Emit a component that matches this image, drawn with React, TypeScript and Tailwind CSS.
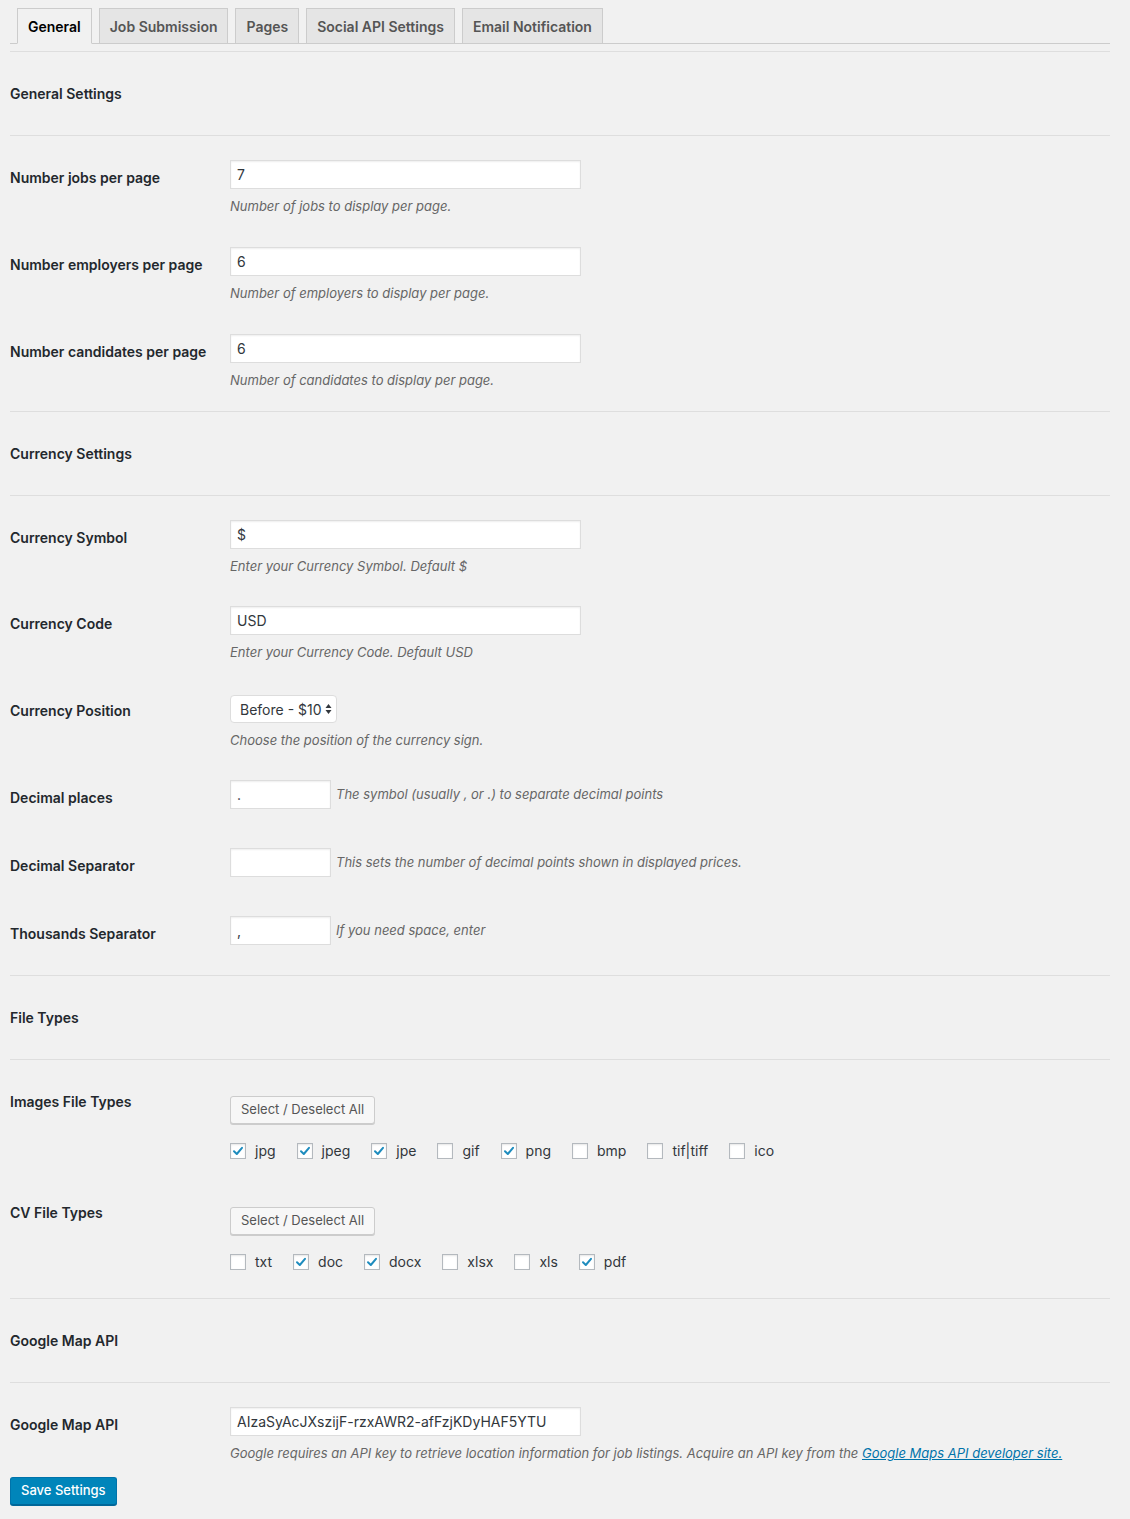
import React from 'react';

const font = { fontFamily: 'Inter, "Noto Sans", sans-serif' };

const tabs = ['General', 'Job Submission', 'Pages', 'Social API Settings', 'Email Notification'];

const imageTypes = [
  { name: 'jpg', checked: true },
  { name: 'jpeg', checked: true },
  { name: 'jpe', checked: true },
  { name: 'gif', checked: false },
  { name: 'png', checked: true },
  { name: 'bmp', checked: false },
  { name: 'tif|tiff', checked: false },
  { name: 'ico', checked: false },
];

const cvTypes = [
  { name: 'txt', checked: false },
  { name: 'doc', checked: true },
  { name: 'docx', checked: true },
  { name: 'xlsx', checked: false },
  { name: 'xls', checked: false },
  { name: 'pdf', checked: true },
];

function Hr() {
  return <div className="h-px bg-[#dedede]" />;
}

function SectionTitle({ title }: { title: string }) {
  return (
    <>
      <Hr />
      <div className="h-[83px] flex items-center text-[14px] font-semibold text-[#23282d]">{title}</div>
      <Hr />
    </>
  );
}

function Label({ text, className = 'pt-[8px]' }: { text: string; className?: string }) {
  return (
    <div className={`w-[220px] shrink-0 text-[14px] leading-[20px] font-semibold text-[#23282d] ${className}`}>
      {text}
    </div>
  );
}

function TextInput({ value, wide = true }: { value: string; wide?: boolean }) {
  return (
    <div
      className={`${wide ? 'w-[351px]' : 'w-[101px]'} h-[29px] bg-white border border-[#dddddd] shadow-[inset_0_1px_2px_rgba(0,0,0,0.07)] px-[6px] flex items-center text-[14px] text-[#32373c]`}
    >
      {value}
    </div>
  );
}

function Desc({ children }: { children: React.ReactNode }) {
  return <p className="mt-[7px] text-[13px] leading-[20px] italic text-[#666666]">{children}</p>;
}

function InputRow({ label, value, desc, className = '' }: { label: string; value: string; desc: string; className?: string }) {
  return (
    <div className={`flex items-start ${className}`}>
      <Label text={label} />
      <div>
        <TextInput value={value} />
        <Desc>{desc}</Desc>
      </div>
    </div>
  );
}

function InlineRow({ label, value, desc, className = '' }: { label: string; value: string; desc: string; className?: string }) {
  return (
    <div className={`flex items-start ${className}`}>
      <Label text={label} />
      <div className="flex items-center">
        <TextInput value={value} wide={false} />
        <span className="ml-[5px] text-[13px] italic text-[#666666]">{desc}</span>
      </div>
    </div>
  );
}

function Checkbox({ name, checked }: { name: string; checked: boolean }) {
  return (
    <div className="flex items-center h-[20px]">
      <span className="w-[16px] h-[16px] bg-white border border-[#b4b9be] shadow-[inset_0_1px_2px_rgba(0,0,0,0.1)] flex items-center justify-center">
        {checked && (
          <svg width="12" height="12" viewBox="0 0 12 12">
            <path d="M2 6.3 L4.8 9 L10 2.8" fill="none" stroke="#1e8cbe" strokeWidth="2" strokeLinecap="round" strokeLinejoin="round" />
          </svg>
        )}
      </span>
      <span className="ml-[9px] text-[14px] leading-[20px] text-[#32373c]">{name}</span>
    </div>
  );
}

function FileRow({ label, items, className = '' }: { label: string; items: { name: string; checked: boolean }[]; className?: string }) {
  return (
    <div className={`flex items-start ${className}`}>
      <Label text={label} className="-mt-[4px]" />
      <div>
        <button className="h-[28px] px-[10px] bg-[#f7f7f7] border border-[#cccccc] rounded-[3px] shadow-[0_1px_0_#cccccc] text-[13px] text-[#555555]">
          Select / Deselect All
        </button>
        <div className="mt-[17px] flex items-center gap-x-[21px]">
          {items.map((it) => (
            <Checkbox key={it.name} name={it.name} checked={it.checked} />
          ))}
        </div>
      </div>
    </div>
  );
}

export default function App() {
  return (
    <div className="min-h-[1519px] bg-[#f1f1f1] pl-[10px] pr-[20px] pt-[8px] pb-[14px] text-[#23282d]" style={font}>
      {/* Tabs */}
      <div className="flex items-end border-b border-[#cccccc] pl-[7px] gap-x-[7px]">
        {tabs.map((t, i) => (
          <div
            key={t}
            className={
              i === 0
                ? 'h-[36px] px-[10px] flex items-center border border-[#cccccc] border-b-[#f1f1f1] -mb-px bg-[#f1f1f1] text-[14px] font-semibold text-black'
                : 'h-[35px] px-[10px] flex items-center border border-[#cccccc] border-b-0 bg-[#e5e5e5] text-[14px] font-semibold text-[#555555]'
            }
          >
            {t}
          </div>
        ))}
      </div>

      <div className="mt-[7px]">
        <SectionTitle title="General Settings" />
        <div className="pt-[24px] pb-[21px] flex flex-col gap-y-[31px]">
          <InputRow label="Number jobs per page" value="7" desc="Number of jobs to display per page." />
          <InputRow label="Number employers per page" value="6" desc="Number of employers to display per page." />
          <InputRow label="Number candidates per page" value="6" desc="Number of candidates to display per page." />
        </div>

        <SectionTitle title="Currency Settings" />
        <div className="pt-[24px] pb-[30px]">
          <InputRow label="Currency Symbol" value="$" desc="Enter your Currency Symbol. Default $" />
          <InputRow className="mt-[30px]" label="Currency Code" value="USD" desc="Enter your Currency Code. Default USD" />
          <div className="flex items-start mt-[33px]">
            <Label text="Currency Position" className="pt-[6px]" />
            <div>
              <div className="w-[107px] h-[28px] bg-white border border-[#dddddd] rounded-[4px] pl-[9px] pr-[4px] flex items-center justify-between text-[14px] text-[#32373c]">
                <span>Before - $10</span>
                <svg width="7" height="12" viewBox="0 0 7 12">
                  <path d="M3.5 1 L6.5 5 L0.5 5 Z" fill="#32373c" />
                  <path d="M3.5 11 L6.5 7 L0.5 7 Z" fill="#32373c" />
                </svg>
              </div>
              <Desc>Choose the position of the currency sign.</Desc>
            </div>
          </div>
          <InlineRow className="mt-[30px]" label="Decimal places" value="." desc="The symbol (usually , or .) to separate decimal points" />
          <InlineRow className="mt-[39px]" label="Decimal Separator" value="" desc="This sets the number of decimal points shown in displayed prices." />
          <InlineRow className="mt-[39px]" label="Thousands Separator" value="," desc="If you need space, enter" />
        </div>

        <SectionTitle title="File Types" />
        <div className="pt-[36px] pb-[26px]">
          <FileRow label="Images File Types" items={imageTypes} />
          <FileRow className="mt-[46px]" label="CV File Types" items={cvTypes} />
        </div>

        <SectionTitle title="Google Map API" />
        <div className="pt-[24px]">
          <div className="flex items-start">
            <Label text="Google Map API" />
            <div>
              <TextInput value="AIzaSyAcJXszijF-rzxAWR2-afFzjKDyHAF5YTU" />
              <Desc>
                Google requires an API key to retrieve location information for job listings. Acquire an API key from the{' '}
                <a href="#" className="text-[#0073aa] underline">Google Maps API developer site.</a>
              </Desc>
            </div>
          </div>
        </div>

        <button className="mt-[14px] h-[28px] px-[10px] bg-[#0085ba] border border-[#0073aa] border-b-[#006799] rounded-[3px] shadow-[0_1px_0_#006799] text-[13px] font-medium text-white">
          Save Settings
        </button>
      </div>
    </div>
  );
}
